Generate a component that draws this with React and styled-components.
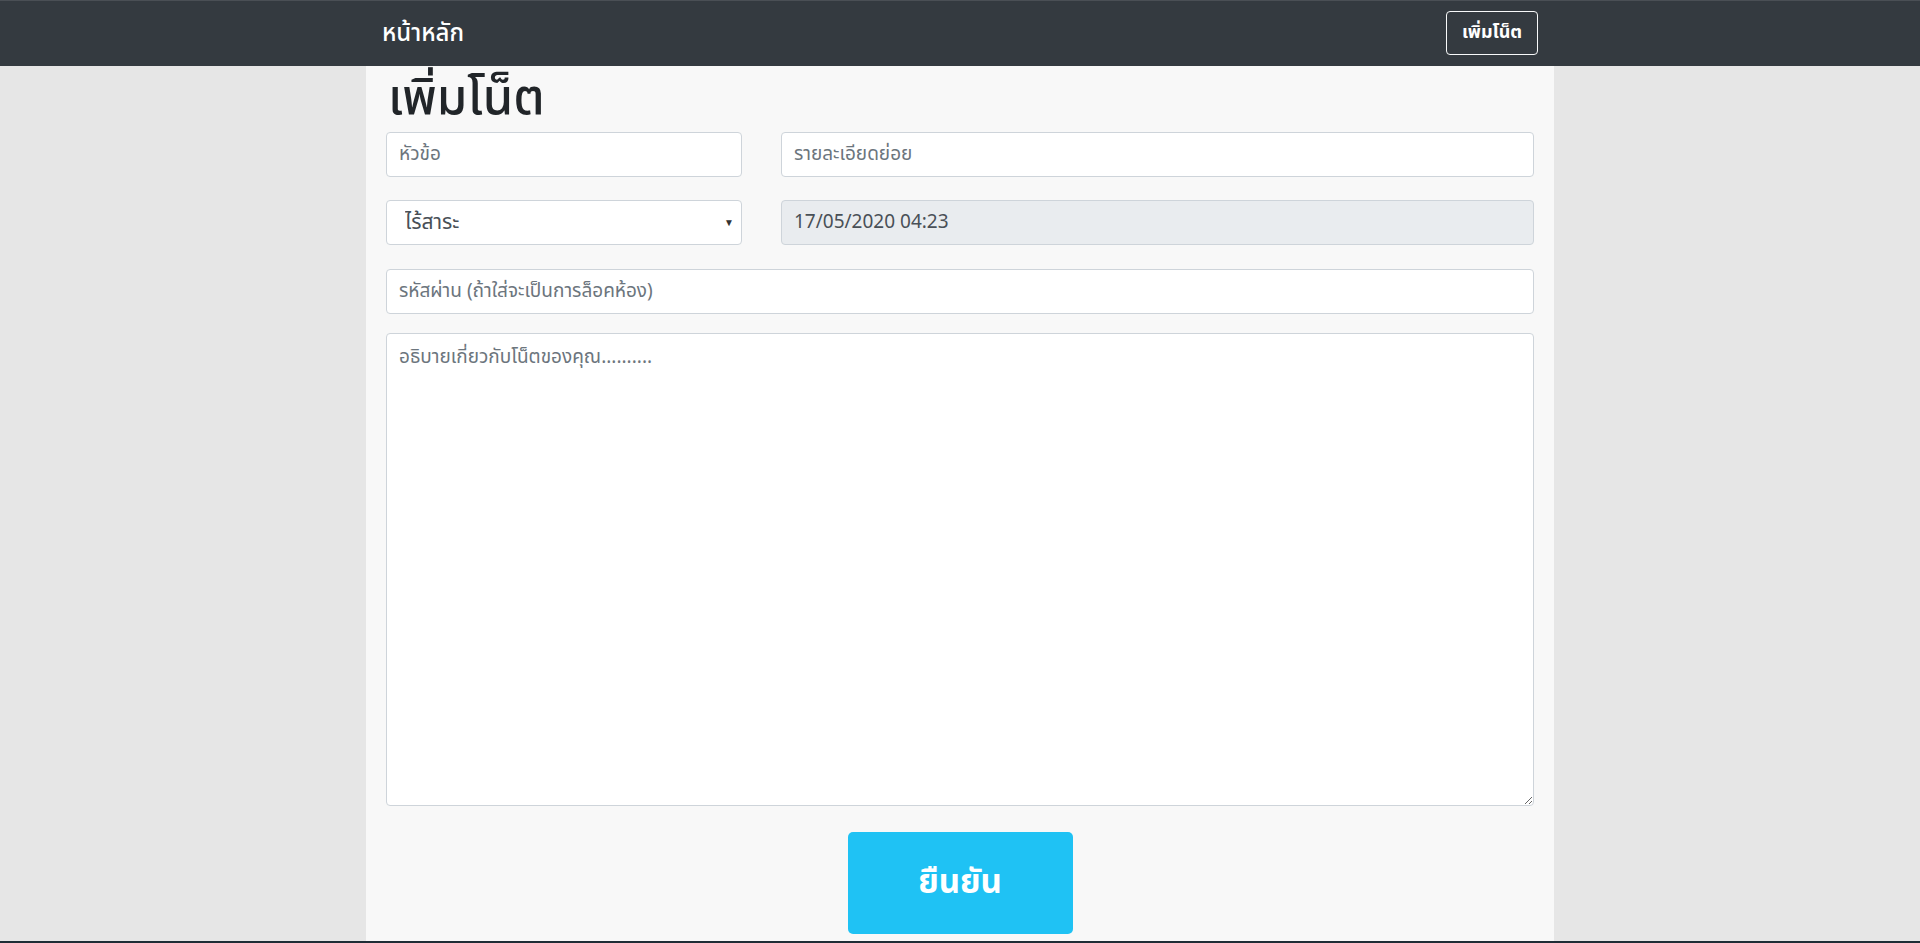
import React from 'react';
import styled, { createGlobalStyle } from 'styled-components';

const GlobalStyle = createGlobalStyle`
    html, body {
        margin: 0;
        padding: 0;
        background-color: #e6e6e6;
        font-family: "Noto Sans Thai", "Leelawadee UI", Tahoma, "Noto Sans", "Open Sans", sans-serif;
        color: #212529;
    }

    * {
        box-sizing: border-box;
    }
`;

const Page = styled.div`
    min-height: 943px;
    display: flex;
    flex-direction: column;
`;

const Navbar = styled.nav`
    height: 66px;
    background-color: #343a40;
    border-top: 1px solid #4a4f55;
`;

const NavInner = styled.div`
    width: 1156px;
    height: 100%;
    margin: 0 auto;
    display: flex;
    align-items: center;
    justify-content: space-between;
`;

const Brand = styled.a`
    color: #fff;
    font-size: 24px;
    font-weight: 500;
    text-decoration: none;
`;

const NavButton = styled.button`
    height: 44px;
    width: 92px;
    margin-top: -2px;
    padding: 0;
    background: transparent;
    border: 1px solid #f8f9fa;
    border-radius: 4px;
    color: #fff;
    font-family: inherit;
    font-size: 18px;
    font-weight: 700;
`;

const Panel = styled.main`
    width: 1188px;
    margin: 0 auto;
    padding: 0 20px 7px;
    background-color: #f8f8f8;
    flex: 1;
`;

const Title = styled.h1`
    margin: 0;
    height: 66px;
    display: flex;
    align-items: center;
    padding-left: 2px;
    font-size: 49px;
    font-weight: 500;
    line-height: 1;
`;

const Row = styled.div`
    display: grid;
    grid-template-columns: 356px 1fr;
    column-gap: 39px;
    margin-bottom: ${(p) => p.gap || 23}px;
`;

const Field = styled.input`
    display: block;
    width: 100%;
    height: 45px;
    padding: 0 12px;
    border: 1px solid #ced4da;
    border-radius: 4px;
    background-color: ${(p) => (p.readOnly ? '#e9ecef' : '#fff')};
    color: #495057;
    font-family: inherit;
    font-size: 19px;

    &::placeholder {
        color: #6c757d;
    }
`;

const SelectWrap = styled.div`
    position: relative;
`;

const Select = styled.select`
    display: block;
    width: 100%;
    height: 45px;
    padding: 0 30px 0 18px;
    border: 1px solid #ced4da;
    border-radius: 4px;
    background-color: #fff;
    color: #495057;
    font-family: inherit;
    font-size: 21px;
    appearance: none;
`;

const Caret = styled.span`
    position: absolute;
    right: 8px;
    top: 50%;
    transform: translateY(-50%);
    font-size: 10px;
    color: #333;
    pointer-events: none;
`;

const TextArea = styled.textarea`
    display: block;
    width: 100%;
    height: 473px;
    padding: 10px 12px;
    border: 1px solid #ced4da;
    border-radius: 4px;
    background-color: #fff;
    color: #495057;
    font-family: inherit;
    font-size: 19px;
    line-height: 1.5;
    resize: vertical;
    margin-bottom: 26px;

    &::placeholder {
        color: #6c757d;
    }
`;

const Actions = styled.div`
    display: flex;
    justify-content: center;
`;

const Submit = styled.button`
    width: 225px;
    height: 102px;
    border: none;
    border-radius: 5px;
    background-color: #1fc2f4;
    color: #fff;
    font-family: inherit;
    font-size: 33px;
    font-weight: 700;
`;

const Footer = styled.div`
    height: 3px;
    background-color: #1f2d36;
`;

const App = () => {
    return (
        <>
            <GlobalStyle />
            <Page>
                <Navbar>
                    <NavInner>
                        <Brand href="#">หน้าหลัก</Brand>
                        <NavButton>เพิ่มโน็ต</NavButton>
                    </NavInner>
                </Navbar>

                <Panel>
                    <Title>เพิ่มโน็ต</Title>

                    <Row>
                        <Field placeholder="หัวข้อ" />
                        <Field placeholder="รายละเอียดย่อย" />
                    </Row>

                    <Row gap={24}>
                        <SelectWrap>
                            <Select defaultValue="none">
                                <option value="none">ไร้สาระ</option>
                            </Select>
                            <Caret>▼</Caret>
                        </SelectWrap>
                        <Field readOnly value="17/05/2020 04:23" />
                    </Row>

                    <Field
                        placeholder="รหัสผ่าน (ถ้าใส่จะเป็นการล็อคห้อง)"
                        style={{ marginBottom: 19 }}
                    />

                    <TextArea placeholder="อธิบายเกี่ยวกับโน็ตของคุณ.........." />

                    <Actions>
                        <Submit>ยืนยัน</Submit>
                    </Actions>
                </Panel>
                <Footer />
            </Page>
        </>
    );
};

export default App;
